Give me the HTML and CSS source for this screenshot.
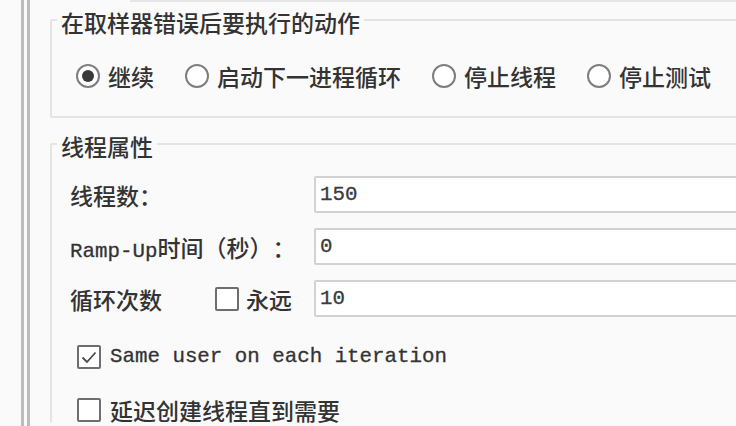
FILE: index.html
```html
<!DOCTYPE html>
<html lang="zh-CN">
<head>
<meta charset="utf-8">
<title>线程组</title>
<link rel="stylesheet" href="styles.css">
</head>
<body>
<div class="frame">
  <div class="rails"><span class="rail"></span><span class="rail"></span></div>
  <div class="content">
    <div class="topfield"></div>
    <fieldset class="group group-error">
      <legend>在取样器错误后要执行的动作</legend>
      <div class="radios">
        <label class="radio"><span class="dot on"></span>继续</label>
        <label class="radio"><span class="dot"></span>启动下一进程循环</label>
        <label class="radio"><span class="dot"></span>停止线程</label>
        <label class="radio"><span class="dot"></span>停止测试</label>
      </div>
    </fieldset>
    <fieldset class="group group-props">
      <legend>线程属性</legend>
      <div class="rows">
        <div class="row">
          <span class="label">线程数<span class="colon">：</span></span>
          <div class="field">150</div>
        </div>
        <div class="row">
          <span class="label"><span class="mono">Ramp-Up</span>时间（秒）<span class="colon">：</span></span>
          <div class="field">0</div>
        </div>
        <div class="row">
          <span class="label label-loop"><span>循环次数</span><span class="check-inline"><span class="box"></span>永远</span></span>
          <div class="field">10</div>
        </div>
      </div>
      <div class="check-row first">
        <span class="box checked"><svg viewBox="0 0 20 20" width="20" height="20"><polyline points="3.5,10.5 8,15 16.5,5.5" fill="none" stroke="#4a4a4a" stroke-width="1.8"/></svg></span>
        <span class="mono">Same user on each iteration</span>
      </div>
      <div class="check-row">
        <span class="box"></span>
        <span>延迟创建线程直到需要</span>
      </div>
    </fieldset>
  </div>
</div>
</body>
</html>
```

FILE: styles.css
```css
html, body {
  margin: 0;
  padding: 0;
  background: #fafafa;
  overflow: hidden;
}
body {
  width: 736px;
  height: 426px;
  font-family: "Noto Sans CJK SC", "Noto Sans", sans-serif;
  font-weight: 500;
  color: #333;
  text-spacing-trim: space-all;
}
.frame {
  display: flex;
  padding-left: 21px;
  height: 426px;
}
.rails {
  display: flex;
  gap: 3px;
  flex: none;
}
.rail {
  width: 3px;
  background: #bdbdbd;
  height: 100%;
}
.content {
  flex: 1;
  margin-left: 20px;
  margin-right: -40px;
}
.topfield {
  margin-left: 80px;
  height: 2px;
  background: #e6e6e6;
}
.group {
  margin: 0;
  padding: 0;
  border: 2px solid #e4e4e4;
  border-radius: 2px;
  min-width: 0;
}
.group legend {
  font-size: 23px;
  line-height: 28px;
  padding: 4px 4px 0;
  margin-left: 5px;
}
.group-error {
  margin-top: 2px;
  padding: 26px 0 26px 0;
}
.radios {
  display: flex;
  align-items: center;
  height: 28px;
  gap: 31px;
  padding-left: 24px;
  font-size: 23px;
}
.radio {
  display: flex;
  align-items: center;
  gap: 8px;
}
.dot {
  width: 20px;
  height: 20px;
  border: 2px solid #7e7e7e;
  border-radius: 50%;
  background: #fff;
  display: flex;
  align-items: center;
  justify-content: center;
}
.dot.on::after {
  content: "";
  width: 12px;
  height: 12px;
  border-radius: 50%;
  background: #3a3a3a;
}
.group-props {
  margin-top: 10px;
  padding: 16px 0 0 0;
  border-bottom: none;
}
.rows {
  display: flex;
  flex-direction: column;
  gap: 15px;
  padding-left: 18px;
}
.row {
  display: flex;
  align-items: center;
  height: 37px;
}
.label {
  width: 244px;
  flex: none;
  font-size: 23px;
  white-space: nowrap;
}
.colon {
  font-family: "Noto Sans CJK TC", "Noto Sans CJK SC", sans-serif;
}
.mono {
  font-family: "Liberation Mono", monospace;
  font-size: 20.8px;
  font-weight: 400;
  -webkit-text-stroke: 0.3px #333;
}
.label-loop {
  display: grid;
  grid-template-columns: 145px auto;
  align-items: center;
}
.check-inline {
  display: flex;
  align-items: center;
  gap: 7px;
}
.field {
  flex: 1;
  height: 33px;
  background: #fff;
  border: 2px solid #d2d2d2;
  border-radius: 2px;
  padding-left: 4px;
  font-family: "Liberation Mono", monospace;
  font-size: 20.8px;
  font-weight: 400;
  line-height: 33px;
  color: #3a3a3a;
  -webkit-text-stroke: 0.3px #3a3a3a;
}
.box {
  width: 20px;
  height: 20px;
  border: 2px solid #6e6e6e;
  border-radius: 2px;
  background: #fff;
  flex: none;
  display: flex;
  align-items: center;
  justify-content: center;
}
.check-row {
  display: flex;
  align-items: center;
  gap: 9px;
  height: 26px;
  line-height: 26px;
  margin-left: 25px;
  font-size: 23px;
  margin-top: 27px;
}
.check-row.first {
  margin-top: 27px;
}
```
